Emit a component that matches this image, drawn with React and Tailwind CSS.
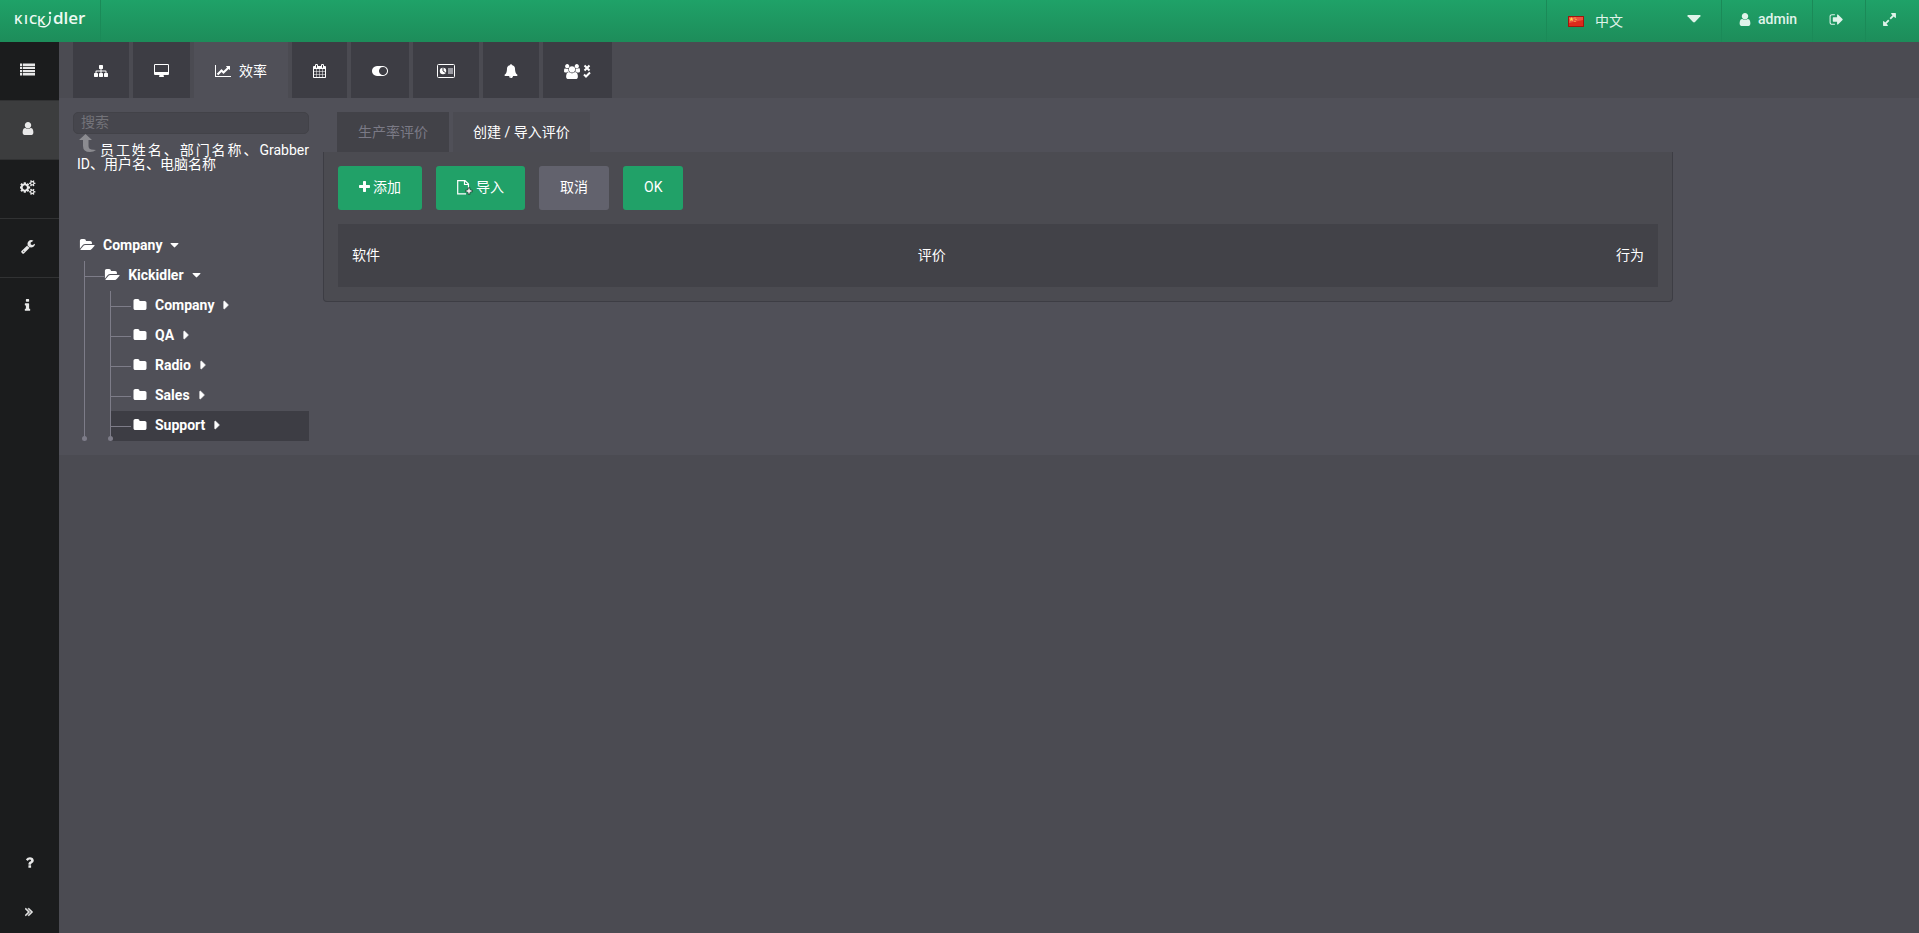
import React from "react";
import { clsx } from "clsx";

const ICONS = {
  user: {
    box: "192 0 1408 1792",
    width: 11,
    d: "M1536 1399q0 109-62.5 187t-150.5 78h-854q-88 0-150.5-78t-62.5-187q0-85 8.5-160.5t31.5-152 58.5-131 94-89 134.5-34.5q131 128 313 128t313-128q76 0 134.5 34.5t94 89 58.5 131 31.5 152 8.5 160.5zm-256-887q0 159-112.5 271.5t-271.5 112.5-271.5-112.5-112.5-271.5 112.5-271.5 271.5-112.5 271.5 112.5 112.5 271.5z",
  },
  list: {
    box: "0 0 1792 1792",
    width: 14,
    d: "M0 192h260v280h-260zM0 570h260v280h-260zM0 948h260v280h-260zM0 1326h260v280h-260zM350 192h1442v280h-1442zM350 570h1442v280h-1442zM350 948h1442v280h-1442zM350 1326h1442v280h-1442z",
  },
  cogs: {
    box: "0 0 1920 1792",
    width: 15,
    d: "M832 896q0-106-75-181t-181-75-181 75-75 181 75 181 181 75 181-75 75-181zm768 512q0-52-38-90t-90-38-90 38-38 90q0 53 37.5 90.5t90.5 37.5 90.5-37.5 37.5-90.5zm0-1024q0-52-38-90t-90-38-90 38-38 90q0 53 37.5 90.5t90.5 37.5 90.5-37.5 37.5-90.5zm-384 421v185q0 10-7 19.5t-16 10.5l-155 24q-11 35-32 76 34 48 90 115 7 11 7 20 0 12-7 19-23 30-82.5 89.5t-78.5 59.5q-11 0-21-7l-115-90q-37 19-77 31-11 108-23 155-7 24-30 24h-186q-11 0-20-7.5t-10-17.5l-23-153q-34-10-75-31l-118 89q-7 7-20 7-11 0-21-8-144-133-144-160 0-9 7-19 10-14 41-53t47-61q-23-44-35-82l-152-24q-10-1-17-9.5t-7-19.5v-185q0-10 7-19.5t16-10.5l155-24q11-35 32-76-34-48-90-115-7-11-7-20 0-12 7-20 22-30 82-89t79-59q11 0 21 7l115 90q34-18 77-32 11-108 23-154 7-24 30-24h186q11 0 20 7.5t10 17.5l23 153q34 10 75 31l118-89q8-7 20-7 11 0 21 8 144 133 144 160 0 8-7 19-12 16-42 54t-45 60q23 48 34 82l152 23q10 2 17 10.5t7 19.5zm640 533v140q0 16-149 31-12 27-30 52 51 113 51 138 0 4-4 7-122 71-124 71-8 0-46-47t-52-68q-20 2-30 2t-30-2q-14 21-52 68t-46 47q-2 0-124-71-4-3-4-7 0-25 51-138-18-25-30-52-149-15-149-31v-140q0-16 149-31 13-29 30-52-51-113-51-138 0-4 4-7 4-2 35-20t59-34 30-16q8 0 46 46.5t52 67.5q20-2 30-2t30 2q51-71 92-112l6-2q4 0 124 70 4 3 4 7 0 25-51 138 17 23 30 52 149 15 149 31zm0-1024v140q0 16-149 31-12 27-30 52 51 113 51 138 0 4-4 7-122 71-124 71-8 0-46-47t-52-68q-20 2-30 2t-30-2q-14 21-52 68t-46 47q-2 0-124-71-4-3-4-7 0-25 51-138-18-25-30-52-149-15-149-31v-140q0-16 149-31 13-29 30-52-51-113-51-138 0-4 4-7 4-2 35-20t59-34 30-16q8 0 46 46.5t52 67.5q20-2 30-2t30 2q51-71 92-112l6-2q4 0 124 70 4 3 4 7 0 25-51 138 17 23 30 52 149 15 149 31z",
  },
  wrench: {
    box: "64 0 1664 1792",
    width: 13,
    d: "M448 1472q0-26-19-45t-45-19-45 19-19 45 19 45 45 19 45-19 19-45zm644-420l-682 682q-37 37-90 37-52 0-91-37l-106-108q-38-36-38-90 0-53 38-91l681-681q39 98 114.5 173.5t173.5 114.5zm634-435q0 39-23 106-47 134-164.5 217.5t-258.5 83.5q-185 0-316.5-131.5t-131.5-316.5 131.5-316.5 316.5-131.5q58 0 121.5 16.5t107.5 46.5q16 11 16 28t-16 28l-293 169v224l193 107q5-3 79-48.5t135.5-81 70.5-35.5q15 0 23.5 10t8.5 25z",
  },
  info: {
    box: "512 0 768 1792",
    width: 6,
    d: "M1216 1344v128q0 26-19 45t-45 19h-512q-26 0-45-19t-19-45v-128q0-26 19-45t45-19h64v-384h-64q-26 0-45-19t-19-45v-128q0-26 19-45t45-19h384q26 0 45 19t19 45v576h64q26 0 45 19t19 45zm-128-1152v192q0 26-19 45t-45 19h-256q-26 0-45-19t-19-45v-192q0-26 19-45t45-19h256q26 0 45 19t19 45z",
  },
  question: {
    box: "384 0 1024 1792",
    width: 8,
    d: "M1088 1256v240q0 16-12 28t-28 12h-240q-16 0-28-12t-12-28v-240q0-16 12-28t28-12h240q16 0 28 12t12 28zm316-600q0 54-15.5 101t-35 76.5-55 59.5-57.5 43.5-61 35.5q-41 23-68.5 65t-27.5 67q0 17-12 32.5t-28 15.5h-240q-15 0-25.5-18.5t-10.5-37.5v-45q0-83 65-156.5t143-108.5q59-27 84-56t25-76q0-42-46.5-74t-107.5-32q-65 0-108 29-35 25-107 115-13 16-31 16-12 0-25-8l-164-125q-13-10-15.5-25t5.5-28q160-266 464-266 80 0 161 31t146 83 106 127.5 41 158.5z",
  },
  expand: {
    box: "384 64 1024 1792",
    width: 8,
    bold: true,
    d: "M979 960q0 13-10 23l-466 466q-10 10-23 10t-23-10l-50-50q-10-10-10-23t10-23l393-393-393-393q-10-10-10-23t10-23l50-50q10-10 23-10t23 10l466 466q10 10 10 23zm384 0q0 13-10 23l-466 466q-10 10-23 10t-23-10l-50-50q-10-10-10-23t10-23l393-393-393-393q-10-10-10-23t10-23l50-50q10-10 23-10t23 10l466 466q10 10 10 23z",
  },
  sitemap: {
    box: "0 0 1792 1792",
    width: 14,
    d: "M1792 1248v320q0 40-28 68t-68 28h-320q-40 0-68-28t-28-68v-320q0-40 28-68t68-28h96v-192h-512v192h96q40 0 68 28t28 68v320q0 40-28 68t-68 28h-320q-40 0-68-28t-28-68v-320q0-40 28-68t68-28h96v-192h-512v192h96q40 0 68 28t28 68v320q0 40-28 68t-68 28h-320q-40 0-68-28t-28-68v-320q0-40 28-68t68-28h96v-192q0-52 38-90t90-38h512v-192h-96q-40 0-68-28t-28-68v-320q0-40 28-68t68-28h320q40 0 68 28t28 68v320q0 40-28 68t-68 28h-96v192h512q52 0 90 38t38 90v192h96q40 0 68 28t28 68z",
  },
  desktop: {
    box: "-64 0 1920 1792",
    width: 15,
    d: "M1728 992v-832q0-13-9.5-22.5t-22.5-9.5h-1600q-13 0-22.5 9.5t-9.5 22.5v832q0 13 9.5 22.5t22.5 9.5h1600q13 0 22.5-9.5t9.5-22.5zm128-832v1088q0 66-47 113t-113 47h-544q0 37 16 77.5t32 71 16 43.5q0 26-19 45t-45 19h-512q-26 0-45-19t-19-45q0-14 16-44t32-70 16-78h-544q-66 0-113-47t-47-113v-1088q0-66 47-113t113-47h1600q66 0 113 47t47 113z",
  },
  chart: {
    box: "0 0 2048 1792",
    width: 16,
    d: "M2048 1536v128h-2048v-1536h128v1408h1920zm-128-1248v435q0 21-19.5 29.5t-35.5-7.5l-121-121-633 633q-10 10-23 10t-23-10l-233-233-416 416-192-192 585-585q10-10 23-10t23 10l233 233 464-464-121-121q-16-16-7.5-35.5t29.5-19.5h435q14 0 23 9t9 23z",
  },
  calendar: {
    box: "64 0 1664 1792",
    width: 13,
    d: "M192 1664h288v-288h-288v288zm352 0h320v-288h-320v288zm-352-352h288v-320h-288v320zm352 0h320v-320h-320v320zm-352-384h288v-288h-288v288zm736 736h320v-288h-320v288zm-384-736h320v-288h-320v288zm768 736h288v-288h-288v288zm-384-352h320v-320h-320v320zm-352-864v-288q0-13-9.5-22.5t-22.5-9.5h-64q-13 0-22.5 9.5t-9.5 22.5v288q0 13 9.5 22.5t22.5 9.5h64q13 0 22.5-9.5t9.5-22.5zm736 864h288v-320h-288v320zm-384-384h320v-288h-320v288zm384 0h288v-288h-288v288zm32-480v-288q0-13-9.5-22.5t-22.5-9.5h-64q-13 0-22.5 9.5t-9.5 22.5v288q0 13 9.5 22.5t22.5 9.5h64q13 0 22.5-9.5t9.5-22.5zm384-64v1280q0 52-38 90t-90 38h-1408q-52 0-90-38t-38-90v-1280q0-52 38-90t90-38h128v-96q0-66 47-113t113-47h64q66 0 113 47t47 113v96h384v-96q0-66 47-113t113-47h64q66 0 113 47t47 113v96h128q52 0 90 38t38 90z",
  },
  toggle: {
    box: "0 0 2048 1792",
    width: 16,
    d: "M0 896q0-130 51-248.5t136.5-204 204-136.5 248.5-51h768q130 0 248.5 51t204 136.5 136.5 204 51 248.5-51 248.5-136.5 204-204 136.5-248.5 51h-768q-130 0-248.5-51t-204-136.5-136.5-204-51-248.5zm1408 512q104 0 198.5-40.5t163.5-109.5 109.5-163.5 40.5-198.5-40.5-198.5-109.5-163.5-163.5-109.5-198.5-40.5-198.5 40.5-163.5 109.5-109.5 163.5-40.5 198.5 40.5 198.5 109.5 163.5 163.5 109.5 198.5 40.5z",
  },
  bell: {
    box: "0 0 1792 1792",
    width: 14,
    d: "M912 1696q0-16-16-16-59 0-101.5-42.5t-42.5-101.5q0-16-16-16t-16 16q0 73 51.5 124.5t124.5 51.5q16 0 16-16zm816-288q0 52-38 90t-90 38h-448q0 106-75 181t-181 75-181-75-75-181h-448q-52 0-90-38t-38-90q50-42 91-88t85-119.5 74.5-158.5 50-206 19.5-260q0-152 117-282.5t307-158.5q-8-19-8-39 0-40 28-68t68-28 68 28 28 68q0 20-8 39 190 28 307 158.5t117 282.5q0 139 19.5 260t50 206 74.5 158.5 85 119.5 91 88z",
  },
  users: {
    box: "64 0 1920 1792",
    width: 15,
    d: "M657 896q-162 5-265 128h-134q-82 0-138-40.5t-56-118.5q0-353 124-353 6 0 43.5 21t97.5 42.5 119 21.5q67 0 133-23-5 37-5 66 0 159 90 283zm1071 637q0 120-73 189.5t-194 69.5h-874q-121 0-194-69.5t-73-189.5q0-53 3.5-103.5t14-109 26.5-108.5 43-97.5 62-81 85.5-53.5 111.5-20q10 0 43 21.5t73 48 107 48 135 21.5 135-21.5 107-48 73-48 43-21.5q61 0 111.5 20t85.5 53.5 62 81 43 97.5 26.5 108.5 14 109 3.5 103.5zm-1024-1277q0 106-75 181t-181 75-181-75-75-181 75-181 181-75 181 75 75 181zm704 384q0 159-112.5 271.5t-271.5 112.5-271.5-112.5-112.5-271.5 112.5-271.5 271.5-112.5 271.5 112.5 112.5 271.5zm576 225q0 78-56 118.5t-138 40.5h-134q-103-123-265-128 90-124 90-283 0-29-5-66 66 23 133 23 59 0 119-21.5t97.5-42.5 43.5-21q124 0 124 353zm-128-609q0 106-75 181t-181 75-181-75-75-181 75-181 181-75 181 75 75 181z",
  },
  signOut: {
    box: "0 0 1664 1792",
    width: 13,
    d: "M704 1440q0 4 1 20t.5 26.5-3 23.5-10 19.5-20.5 6.5h-320q-119 0-203.5-84.5t-84.5-203.5v-704q0-119 84.5-203.5t203.5-84.5h320q13 0 22.5 9.5t9.5 22.5q0 4 1 20t.5 26.5-3 23.5-10 19.5-20.5 6.5h-320q-66 0-113 47t-47 113v704q0 66 47 113t113 47h312l11.5 1 11.5 3 8 5.5 7 9 2 13.5zm928-544q0 26-19 45l-544 544q-19 19-45 19t-45-19-19-45v-288h-448q-26 0-45-19t-19-45v-384q0-26 19-45t45-19h448v-288q0-26 19-45t45-19 45 19l544 544q19 19 19 45z",
  },
  fullscreen: {
    box: "0 0 1792 1792",
    width: 14,
    d: "M883 1056q0 13-10 23l-332 332 144 144q19 19 19 45t-19 45-45 19h-448q-26 0-45-19t-19-45v-448q0-26 19-45t45-19 45 19l144 144 332-332q10-10 23-10t23 10l114 114q10 10 10 23zm781-864v448q0 26-19 45t-45 19-45-19l-144-144-332 332q-10 10-23 10t-23-10l-114-114q-10-10-10-23t10-23l332-332-144-144q-19-19-19-45t19-45 45-19h448q26 0 45 19t19 45z",
  },
  folder: {
    box: "64 0 1664 1792",
    width: 14,
    d: "M1728 608v704q0 92-66 158t-158 66h-1216q-92 0-158-66t-66-158v-960q0-92 66-158t158-66h320q92 0 158 66t66 158v32h672q92 0 158 66t66 158z",
  },
  folderOpen: {
    box: "0 0 1944 1792",
    width: 16,
    d: "M1943 952q0 31-31 66l-336 396q-43 51-120.5 86.5t-143.5 35.5h-1088q-34 0-60.5-13t-26.5-43q0-31 31-66l336-396q43-51 120.5-86.5t143.5-35.5h1088q34 0 60.5 13t26.5 43zm-343-344v160h-832q-94 0-197 47.5t-164 119.5l-337 396-5 6q0-4-.5-12.5t-.5-12.5v-960q0-92 66-158t158-66h320q92 0 158 66t66 158v32h544q92 0 158 66t66 158z",
  },
  caretDown: {
    box: "384 0 1024 1792",
    width: 9,
    d: "M1408 704q0 26-19 45l-448 448q-19 19-45 19t-45-19l-448-448q-19-19-19-45t19-45 45-19h896q26 0 45 19t19 45z",
  },
  caretRight: {
    box: "576 0 576 1792",
    width: 6,
    bold: true,
    d: "M1152 896q0 26-19 45l-448 448q-19 19-45 19t-45-19-19-45v-896q0-26 19-45t45-19 45 19l448 448q19 19 19 45z",
  },
  plus: {
    box: "192 0 1408 1792",
    width: 11,
    d: "M1600 736v192q0 40-28 68t-68 28h-416v416q0 40-28 68t-68 28h-192q-40 0-68-28t-28-68v-416h-416q-40 0-68-28t-28-68v-192q0-40 28-68t68-28h416v-416q0-40 28-68t68-28h192q40 0 68 28t28 68v416h416q40 0 68 28t28 68z",
  },
};

const Icon = ({ name, large, className }) => {
  const { box, width, d, bold } = ICONS[name];
  return (
    <svg
      viewBox={box}
      width={large ? width + 1 : width}
      height={large ? 15 : 14}
      fill="currentColor"
      stroke={bold ? "currentColor" : "none"}
      strokeWidth={bold ? 80 : 0}
      aria-hidden="true"
      className={clsx("shrink-0", className)}
    >
      <path d={d} />
    </svg>
  );
};

const CardIcon = () => (
  <svg width="18" height="14" viewBox="0 0 18 14" aria-hidden="true">
    <rect x="0.5" y="0.5" width="17" height="13" rx="1" fill="none" stroke="#fff" />
    <circle cx="6" cy="7" r="3.2" fill="#fff" />
    <path d="M6 7V3.8M6 7l2.6 1.6" stroke="#3d3c44" />
    <rect x="11" y="4" width="5" height="6" fill="#9b9ba2" />
  </svg>
);

const UsersCheckIcon = () => (
  <span className="flex items-center gap-[3px]">
    <Icon name="users" large />
    <svg width="8" height="14" viewBox="0 0 8 14" fill="none" stroke="#fff" strokeWidth="2" aria-hidden="true">
      <path d="M1.5 1.5l5 5M6.5 1.5l-5 5M1 10.5l2 2 4-4" />
    </svg>
  </span>
);

const ImportIcon = () => (
  <svg width="16" height="15" viewBox="0 0 16 15" fill="none" aria-hidden="true">
    <path d="M11.500 8V4L8 0.600H0.700v13.200H9M7.500 0.600V4.500H11.500" stroke="#fff" strokeWidth="1.200" />
    <path d="M12 7.500v7M8.500 11h7" stroke="#2b3a35" strokeWidth="2.600" />
    <path d="M12 8.500v5M9.500 11h5" stroke="#fff" strokeWidth="1.400" />
  </svg>
);

const Flag = () => (
  <svg width="16" height="11" viewBox="0 0 16 11" aria-hidden="true">
    <rect width="16" height="11" fill="#a3160d" />
    <rect x="1" y="1" width="14" height="9" fill="#dd2a1c" />
    <path d="M1 1h14v3L1 7z" fill="#ea5140" />
    <path d="M3.500 1l.7 1.600h1.600l-1.300 1 .5 1.700-1.500-1-1.500 1 .5-1.700-1.300-1h1.600z" fill="#ffd84a" />
    <path d="M6.500 1.500h1v1h-1zM7.500 3h1v1h-1zM6.500 5h1v1h-1z" fill="#ffd84a" />
  </svg>
);

const Logo = () => (
  <svg
    width="80"
    height="30"
    viewBox="0 0 80 30"
    fill="#eefaf3"
    role="img"
    aria-label="KICKidler"
    className="overflow-visible font-['Open_Sans',sans-serif] font-semibold"
  >
    <text x="-1" y="20" fontSize="13">K</text>
    <text x="9" y="20" fontSize="13">I</text>
    <text x="14" y="20" fontSize="13">C</text>
    <text x="22" y="21" fontSize="13">K</text>
    <text x="38" y="20" fontSize="17">dler</text>
    <circle cx="35" cy="9" r="1.300" />
    <path d="M35 12v4.500q-.5 4.500-4.500 6-4 1-7-1" fill="none" stroke="#eefaf3" strokeWidth="1.500" />
  </svg>
);

const Header = () => (
  <header className="flex h-[42px] items-stretch bg-linear-to-b from-[#1fa268] to-[#1d8d5a] text-[#e0f3ea]">
    <a href="#" className="flex w-[101px] items-start border-r border-[#1b8a58] pt-1 pl-[15px]">
      <Logo />
    </a>
    <div className="ml-auto flex items-stretch">
      <div className="relative flex w-[175px] items-center border-l border-[#1b8a58] pl-[21px]">
        <Flag />
        <select
          aria-label="语言"
          className="h-full flex-1 appearance-none bg-transparent pl-[11px] text-sm outline-none"
        >
          <option>中文</option>
        </select>
        <svg
          width="14"
          height="8"
          viewBox="0 0 14 8"
          fill="currentColor"
          aria-hidden="true"
          className="pointer-events-none absolute top-[15px] right-[20px]"
        >
          <path d="M1 0h12q1 .4.4 1.200L8 7q-1 .8-2 0L.6 1.200Q0 .4 1 0z" />
        </svg>
      </div>
      <button className="flex w-[91px] items-center gap-[7px] border-l border-[#1b8a58] pb-1 pl-[17px] text-sm font-medium">
        <Icon name="user" large />
        admin
      </button>
      <button aria-label="退出" className="flex w-[53px] items-center border-l border-[#1b8a58] pb-1 pl-4">
        <Icon name="signOut" large />
      </button>
      <button aria-label="全屏" className="flex w-[54px] items-center border-l border-[#1b8a58] pb-1 pl-4">
        <Icon name="fullscreen" large />
      </button>
    </div>
  </header>
);

const NAV = [
  { icon: "list", label: "列表" },
  { icon: "user", label: "用户", active: true },
  { icon: "cogs", label: "参数" },
  { icon: "wrench", label: "工具" },
  { icon: "info", label: "信息", last: true },
];

const Sidebar = () => (
  <nav className="flex w-[59px] shrink-0 flex-col bg-[#1b1c1d] text-[#e8e8e8]">
    {NAV.map(({ icon, label, active, last }) => (
      <button
        key={icon}
        aria-label={label}
        className={clsx(
          "flex h-[59px] items-center justify-center border-b pr-1 pb-[3px]",
          last ? "border-transparent" : "border-[#313233]",
          active && "bg-[#3c3d3e]"
        )}
      >
        <Icon name={icon} large />
      </button>
    ))}
    <div className="mt-auto flex flex-col">
      <button aria-label="帮助" className="flex h-[50px] items-center justify-center">
        <Icon name="question" large />
      </button>
      <button aria-label="展开" className="flex h-[46px] items-center justify-center pt-1 pr-0.5">
        <Icon name="expand" />
      </button>
    </div>
  </nav>
);

const TABS = [
  { id: "structure", icon: <Icon name="sitemap" /> },
  { id: "monitor", icon: <Icon name="desktop" /> },
  { id: "efficiency", icon: <Icon name="chart" />, label: "效率", active: true },
  { id: "calendar", icon: <Icon name="calendar" /> },
  { id: "toggle", icon: <Icon name="toggle" /> },
  { id: "report", icon: <CardIcon />, wide: true },
  { id: "alerts", icon: <Icon name="bell" /> },
  { id: "groups", icon: <UsersCheckIcon /> },
];

const MainTabs = () => (
  <div className="flex gap-1 bg-[#4b4b52] px-[14px]">
    {TABS.map(({ id, icon, label, active, wide }) => (
      <button
        key={id}
        aria-label={label || id}
        className={clsx(
          "flex h-14 items-center gap-2 pt-0.5 text-sm",
          wide ? "px-6" : "px-[21px]",
          active ? "bg-[#505058]" : "bg-[#3d3d44]"
        )}
      >
        {icon}
        {label}
      </button>
    ))}
  </div>
);

const GROUPS = ["Company", "QA", "Radio", "Sales", "Support"];

const Dot = () => (
  <span className="absolute bottom-0 -left-[3px] size-[5px] rounded-full bg-[#7d7c88]" />
);

const TreeNode = ({ name, open }) => (
  <button className="flex h-[30px] w-full items-center gap-2 pb-0.5 text-sm font-bold">
    <Icon name={open ? "folderOpen" : "folder"} />
    {name}
    <Icon name={open ? "caretDown" : "caretRight"} className={open ? "" : "ml-px"} />
  </button>
);

const Tree = () => (
  <div className="mt-[61px] pl-[6px]">
    <TreeNode name="Company" open />
    <div className="relative ml-[5px] border-l border-[#7d7c88]">
      <div className="flex items-center">
        <span className="h-px w-[21px] bg-[#7d7c88]" />
        <TreeNode name="Kickidler" open />
      </div>
      <div className="relative ml-[25px] border-l border-[#7d7c88]">
        {GROUPS.map((name) => (
          <div
            key={name}
            className={clsx("flex items-center", name === "Support" && "bg-[#3d3d44]")}
          >
            <span className="mr-0.5 h-px w-5 shrink-0 bg-[#7d7c88]" />
            <TreeNode name={name} />
          </div>
        ))}
        <Dot />
      </div>
      <Dot />
    </div>
  </div>
);

const Employees = () => (
  <aside className="w-[236px] shrink-0">
    <input
      type="text"
      placeholder="搜索"
      aria-label="搜索"
      className="block h-[22px] w-full rounded-[5px] border border-[#424248] bg-[#46464d] px-[7px] pb-0.5 text-sm outline-none placeholder:text-[#737379]"
    />
    <p className="h-9 pl-1 text-justify text-sm leading-[14px]">
      <svg width="17" height="23" viewBox="0 0 17 23" aria-hidden="true" className="mx-0.5 inline-block align-bottom">
        <path d="M6.500 0L13 6H9.500v6q0 3 3 3.500l4.500.5q-2.500 2-6 2Q4 18 4 12V6H0z" fill="#8b8b90" />
      </svg>
      员工姓名、部门名称、Grabber ID、用户名、电脑名称
    </p>
    <Tree />
  </aside>
);

const Ratings = () => (
  <section className="w-full max-w-[1350px]">
    <div className="flex gap-1 pl-[14px] text-sm">
      <button className="h-10 bg-[#424248] px-[21px] text-[#7b7a86]">生产率评价</button>
      <button className="h-10 bg-[#4b4b52] px-5">创建 / 导入评价</button>
    </div>
    <div className="rounded-b-sm border border-t-0 border-[#3d3d44] bg-[#4b4b51] p-[14px]">
      <div className="flex gap-[14px] text-sm">
        <button className="flex h-11 items-center gap-[3px] rounded-[3px] bg-[#21a168] px-[21px] pb-0.5">
          <Icon name="plus" />
          添加
        </button>
        <button className="flex h-11 items-center gap-[3px] rounded-[3px] bg-[#21a168] px-[21px] pb-0.5">
          <ImportIcon />
          导入
        </button>
        <button className="h-11 rounded-[3px] bg-[#62626d] px-[21px] pb-0.5">取消</button>
        <button className="h-11 rounded-[3px] bg-[#21a168] px-[21px] pb-0.5">OK</button>
      </div>
      <table className="mt-[14px] w-full bg-[#424248] text-sm">
        <thead>
          <tr className="h-[63px]">
            <th className="w-3/7 px-[14px] pb-0.5 text-left font-normal">软件</th>
            <th className="px-[14px] pb-0.5 text-left font-normal">评价</th>
            <th className="px-[14px] pb-0.5 text-right font-normal">行为</th>
          </tr>
        </thead>
      </table>
    </div>
  </section>
);

export default function App() {
  return (
    <div className="flex min-h-screen flex-col bg-[#4b4b52] font-[Roboto,'Noto_Sans_CJK_SC',sans-serif] text-white">
      <Header />
      <div className="flex flex-1 items-stretch">
        <Sidebar />
        <main className="min-w-0 flex-1">
          <MainTabs />
          <div className="flex gap-[14px] bg-[#505058] p-[14px]">
            <Employees />
            <Ratings />
          </div>
        </main>
      </div>
    </div>
  );
}
